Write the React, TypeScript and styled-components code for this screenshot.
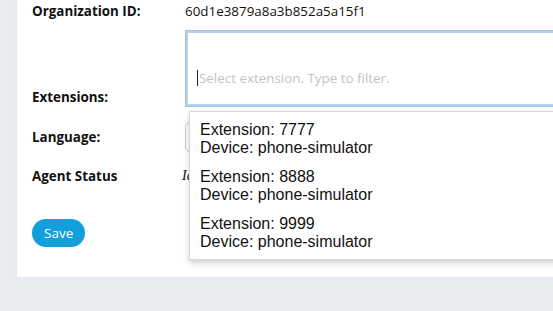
import React from 'react';
import styled, { createGlobalStyle } from 'styled-components';

const GlobalStyle = createGlobalStyle`
  html, body {
    margin: 0;
    padding: 0;
    background: #e8ecf0;
    overflow: hidden;
  }
  body {
    font-family: "Open Sans", "Liberation Sans", sans-serif;
    color: #111;
  }
`;

const Page = styled.div`
  padding: 0 0 0 17px;
  width: 800px;
`;

const Card = styled.div`
  background: #fff;
  padding: 0 15px 30px 15px;
  box-shadow: 0 1px 2px rgba(0, 0, 0, 0.06);
`;

const Row = styled.div<{ $align?: string; $top?: number }>`
  display: flex;
  align-items: ${(p) => p.$align || 'center'};
  margin-top: ${(p) => p.$top ?? 0}px;
`;

const Label = styled.div`
  width: 153px;
  flex-shrink: 0;
  font-size: 13.4px;
  font-weight: 700;
  line-height: 20px;
`;

const Value = styled.div`
  font-size: 13.4px;
  line-height: 22px;
`;

const Italic = styled.div`
  font-family: "Liberation Serif", "Times New Roman", serif;
  font-style: italic;
  font-size: 14px;
  line-height: 22px;
  margin-left: -3px;
`;

const Field = styled.div`
  position: relative;
  flex: 1;
`;

const TagInput = styled.div`
  height: 77px;
  box-sizing: border-box;
  border: 1px solid #b4bcc6;
  box-shadow: inset 0 0 0 2px #b2d2f4;
  display: flex;
  align-items: flex-end;
  padding: 0 11px 20px 11px;
`;

const Caret = styled.span`
  display: inline-block;
  width: 1px;
  height: 16px;
  background: #222;
  margin-right: 1px;
`;

const Placeholder = styled.span`
  font-size: 13.4px;
  line-height: 16px;
  color: #c4c4c4;
`;

const Menu = styled.ul`
  position: absolute;
  top: 81px;
  left: 4px;
  right: 0;
  margin: 0;
  padding: 4px 0 3px 0;
  list-style: none;
  background: #fff;
  border: 1px solid #d6d6d6;
  box-shadow: 0 3px 6px rgba(0, 0, 0, 0.18);
  z-index: 10;
`;

const MenuItem = styled.li`
  padding: 5px 10px;
  font-family: "Liberation Sans", Arial, sans-serif;
  font-size: 16px;
  line-height: 18.4px;
  color: #111;
`;

const Select = styled.div`
  width: 220px;
  height: 30px;
  box-sizing: border-box;
  border: 1px solid #c8c8c8;
  border-radius: 5px;
  background: #fff;
`;

const SaveButton = styled.button`
  margin-top: 32px;
  height: 28px;
  padding: 0 12px;
  border: none;
  border-radius: 14px;
  background: #129fdc;
  color: #fff;
  font-family: "Open Sans", sans-serif;
  font-size: 13.5px;
  cursor: pointer;
`;

const extensions = ['7777', '8888', '9999'];

export default function App() {
  return (
    <>
      <GlobalStyle />
      <Page>
        <Card>
          <Row>
            <Label>Organization ID:</Label>
            <Value>60d1e3879a8a3b852a5a15f1</Value>
          </Row>
          <Row $align="flex-end" $top={8}>
            <Label>Extensions:</Label>
            <Field>
              <TagInput>
                <Caret />
                <Placeholder>Select extension. Type to filter.</Placeholder>
              </TagInput>
              <Menu>
                {extensions.map((ext) => (
                  <MenuItem key={ext}>
                    Extension: {ext}
                    <br />
                    Device: phone-simulator
                  </MenuItem>
                ))}
              </Menu>
            </Field>
          </Row>
          <Row $top={15}>
            <Label>Language:</Label>
            <Select />
          </Row>
          <Row $top={13}>
            <Label>Agent Status</Label>
            <Italic>Idle</Italic>
          </Row>
          <SaveButton>Save</SaveButton>
        </Card>
      </Page>
    </>
  );
}
